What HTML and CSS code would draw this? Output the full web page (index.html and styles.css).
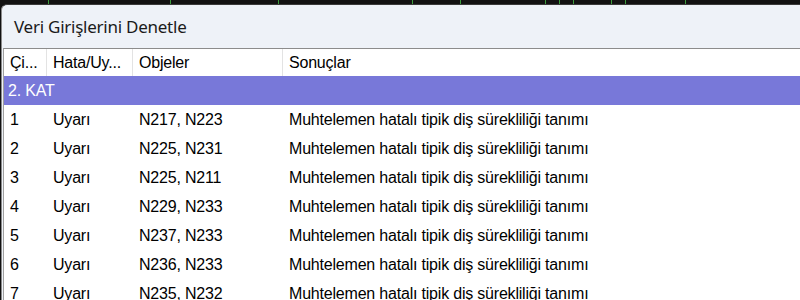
FILE: index.html
```html
<!DOCTYPE html>
<html lang="tr">
<head>
<meta charset="utf-8">
<title>Veri Girişlerini Denetle</title>
<link rel="stylesheet" href="styles.css">
</head>
<body>
<div class="topbar"></div>
<div class="window">
  <div class="title">Veri Girişlerini Denetle</div>
  <div class="table">
    <div class="row head">
      <div class="c c1">Çi...</div>
      <div class="c c2">Hata/Uy...</div>
      <div class="c c3">Objeler</div>
      <div class="c c4">Sonuçlar</div>
    </div>
    <div class="group">2. KAT</div>
    <div class="row"><div class="c c1">1</div><div class="c c2">Uyarı</div><div class="c c3">N217, N223</div><div class="c c4">Muhtelemen hatalı tipik diş sürekliliği tanımı</div></div>
    <div class="row"><div class="c c1">2</div><div class="c c2">Uyarı</div><div class="c c3">N225, N231</div><div class="c c4">Muhtelemen hatalı tipik diş sürekliliği tanımı</div></div>
    <div class="row"><div class="c c1">3</div><div class="c c2">Uyarı</div><div class="c c3">N225, N211</div><div class="c c4">Muhtelemen hatalı tipik diş sürekliliği tanımı</div></div>
    <div class="row"><div class="c c1">4</div><div class="c c2">Uyarı</div><div class="c c3">N229, N233</div><div class="c c4">Muhtelemen hatalı tipik diş sürekliliği tanımı</div></div>
    <div class="row"><div class="c c1">5</div><div class="c c2">Uyarı</div><div class="c c3">N237, N233</div><div class="c c4">Muhtelemen hatalı tipik diş sürekliliği tanımı</div></div>
    <div class="row"><div class="c c1">6</div><div class="c c2">Uyarı</div><div class="c c3">N236, N233</div><div class="c c4">Muhtelemen hatalı tipik diş sürekliliği tanımı</div></div>
    <div class="row"><div class="c c1">7</div><div class="c c2">Uyarı</div><div class="c c3">N235, N232</div><div class="c c4">Muhtelemen hatalı tipik diş sürekliliği tanımı</div></div>
  </div>
</div>
</body>
</html>
```

FILE: styles.css
```css
html, body {
  margin: 0;
  padding: 0;
  width: 800px;
  height: 300px;
  overflow: hidden;
  background: #111;
}
.topbar {
  height: 4px;
  background:
    linear-gradient(90deg,
      transparent 48px, #3c9a3c 48px, #3c9a3c 49px, transparent 49px,
      transparent 170px, #3c9a3c 170px, #3c9a3c 171px, transparent 171px,
      transparent 278px, #3c9a3c 278px, #3c9a3c 279px, transparent 279px,
      transparent 412px, #3c9a3c 412px, #3c9a3c 413px, transparent 413px,
      transparent 460px, #3c9a3c 460px, #3c9a3c 461px, transparent 461px,
      transparent 545px, #3c9a3c 545px, #3c9a3c 546px, transparent 546px,
      transparent 559px, #3c9a3c 559px, #3c9a3c 560px, transparent 560px,
      transparent 573px, #3c9a3c 573px, #3c9a3c 574px, transparent 574px,
      transparent 611px, #3c9a3c 611px, #3c9a3c 612px, transparent 612px,
      transparent 625px, #3c9a3c 625px, #3c9a3c 626px, transparent 626px,
      transparent 685px, #3c9a3c 685px, #3c9a3c 686px, transparent 686px),
    #121212;
}
.window {
  margin-left: 1px;
  height: 296px;
  background: #eef2f8;
  border-top: 1px solid #3a3a3a;
  border-left: 1px solid #8a8a8a;
  border-top-left-radius: 6px;
  box-sizing: border-box;
  display: flex;
  flex-direction: column;
}
.title {
  height: 44px;
  padding-left: 12px;
  font-family: "Noto Sans", "Open Sans", sans-serif;
  font-size: 17px;
  letter-spacing: -0.25px;
  line-height: 43px;
  color: #1a1a1a;
}
.table {
  flex: 1;
  margin-left: 1px;
  background: #fff;
  border-top: 1px solid #8c8c8c;
  border-left: 1px solid #a0a0a0;
  font-family: "Liberation Sans", Arial, sans-serif;
  font-size: 16px;
  letter-spacing: -0.2px;
  color: #000;
}
.row {
  display: flex;
  height: 29px;
  align-items: center;
}
.row.head {
  height: 27px;
}
.c {
  padding-left: 6px;
  box-sizing: border-box;
  white-space: nowrap;
}
.c1 { width: 43px; }
.c2 { width: 86px; }
.c3 { width: 150px; }
.c4 { flex: 1; }
.head .c {
  height: 27px;
  line-height: 27px;
  border-right: 1px solid #e3e3e3;
}
.head .c4 { border-right: none; }
.group {
  height: 29px;
  line-height: 29px;
  background: #7878d9;
  color: #fff;
  padding-left: 4px;
}
```
